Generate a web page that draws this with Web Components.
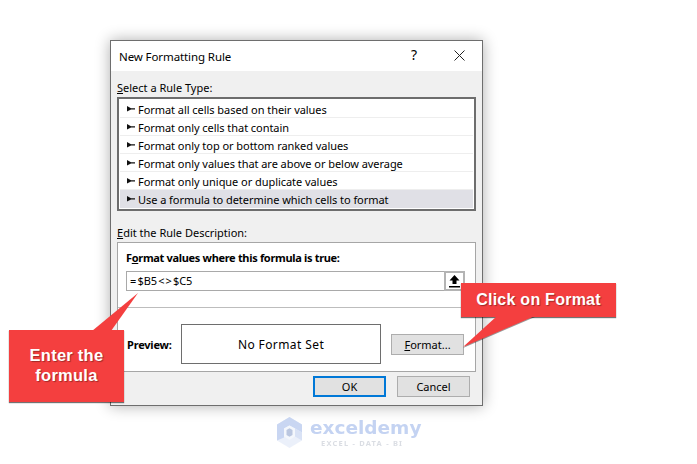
<!DOCTYPE html>
<html>
<head>
<meta charset="utf-8">
<title>New Formatting Rule</title>
<style>
  html, body { margin: 0; background: #fff; }
</style>
</head>
<body>
<x-stage>
  <x-dialog heading="New Formatting Rule">
    <x-label><u>S</u>elect a Rule Type:</x-label>
    <x-rule-list>
      <x-rule-row>Format all cells based on their values</x-rule-row>
      <x-rule-row>Format only cells that contain</x-rule-row>
      <x-rule-row>Format only top or bottom ranked values</x-rule-row>
      <x-rule-row>Format only values that are above or below average</x-rule-row>
      <x-rule-row>Format only unique or duplicate values</x-rule-row>
      <x-rule-row selected>Use a formula to determine which cells to format</x-rule-row>
    </x-rule-list>
    <x-label class="second"><u>E</u>dit the Rule Description:</x-label>
    <x-rule-editor></x-rule-editor>
    <x-footer>
      <x-button default>OK</x-button>
      <x-button>Cancel</x-button>
    </x-footer>
  </x-dialog>
  <x-callout side="left">Enter the<br>formula</x-callout>
  <x-callout side="right">Click on Format</x-callout>
  <x-watermark></x-watermark>
</x-stage>

<script>
const UI_FONT = `"Noto Sans", "Open Sans", sans-serif`;

function shadow(el, html) {
  el.attachShadow({ mode: 'open' }).innerHTML = html;
}

class XStage extends HTMLElement {
  constructor() {
    super();
    shadow(this, `
      <style>
        :host { display: block; position: relative; width: 697px; height: 464px; overflow: hidden;
                box-sizing: border-box; padding: 40px 0 0 110px; background: #fff; }
      </style>
      <slot></slot>`);
  }
}

class XDialog extends HTMLElement {
  constructor() {
    super();
    shadow(this, `
      <style>
        :host { display: flex; flex-direction: column; box-sizing: border-box; width: 373px; height: 366px;
                border: 1px solid #6e6e6e; background: #f0f0f0; font: 11px ${UI_FONT}; color: #000;
                box-shadow: 0 0 14px rgba(0,0,0,.32); }
        .bar { display: flex; align-items: center; height: 30px; flex: none; background: #fff;
               padding-left: 8px; font-size: 11.5px; letter-spacing: -.1px; }
        .bar span { flex: 1; }
        .help { flex: none !important; width: 12px; font-size: 14px; margin-right: 31px; margin-top: -3px; }
        svg { display: block; margin-right: 17px; margin-top: -1px; }
        .body { flex: 1; display: flex; flex-direction: column; padding: 0 6px 0 6px; }
      </style>
      <div class="bar">
        <span id="t"></span>
        <span class="help">?</span>
        <svg width="11" height="11" viewBox="0 0 11 11"><path d="M.5.5l10 10M10.5.5l-10 10" stroke="#222" fill="none"/></svg>
      </div>
      <div class="body"><slot></slot></div>`);
    this.shadowRoot.getElementById('t').textContent = this.getAttribute('heading');
  }
}

class XLabel extends HTMLElement {
  constructor() {
    super();
    shadow(this, `
      <style>
        :host { display: block; box-sizing: border-box; height: 26px; padding-top: 8px; line-height: 18px; }
        :host(.second) { height: 31px; padding-top: 13px; }
      </style>
      <slot></slot>`);
  }
}

class XRuleList extends HTMLElement {
  constructor() {
    super();
    shadow(this, `
      <style>
        :host { display: flex; flex-direction: column; box-sizing: border-box; height: 114px;
                border: 2px solid #6d6d6d; background: #fff; padding: 1px; }
      </style>
      <slot></slot>`);
  }
}

class XRuleRow extends HTMLElement {
  constructor() {
    super();
    shadow(this, `
      <style>
        :host { display: flex; align-items: center; gap: 3px; box-sizing: border-box; height: 18px;
                padding-left: 7px; box-shadow: inset 0 -1px #eeeeee; letter-spacing: -.05px; }
        :host([selected]) { background: #e0e0e6; box-shadow: none; }
        svg { flex: none; }
      </style>
      <svg width="8" height="6" viewBox="0 0 8 6"><path d="M0 0l4 2.2h4v1.2H4L0 5.6z" fill="#111"/></svg>
      <slot></slot>`);
  }
}

class XRuleEditor extends HTMLElement {
  constructor() {
    super();
    shadow(this, `
      <style>
        :host { display: flex; flex-direction: column; box-sizing: border-box; height: 130px;
                border: 1px solid #a6a6a6; background: #fff; padding: 0 0 0 8px; }
        .head { height: 28px; line-height: 29px; font-weight: 700; flex: none; letter-spacing: -.32px; }
        .field { display: flex; width: 339px; height: 20px; flex: none; box-sizing: border-box;
                 border: 1px solid #a9a9a9; background: #fff; }
        .field span { flex: 1; line-height: 18px; padding-left: 3px; word-spacing: -1.5px; letter-spacing: -.1px; }
        .pick { flex: none; width: 21px; margin: -1px -1px -1px 0; box-sizing: border-box;
                border: 2px solid #b4b4b4; display: flex; align-items: center; justify-content: center; }
        hr { margin: 16px 0 0 -8px; border: 0; border-top: 1px solid #bdbdbd; height: 0; flex: none; }
        .preview { display: flex; align-items: center; margin-top: 16px; height: 40px; flex: none; }
        b { width: 54px; padding-left: 1px; flex: none; letter-spacing: -.2px; }
        .box { width: 200px; height: 40px; box-sizing: border-box; border: 1px solid #6e6e6e; flex: none;
               display: flex; align-items: center; justify-content: center; font-size: 12px; letter-spacing: .4px; }
        x-button { margin-left: 10px; }
      </style>
      <div class="head">F<u>o</u>rmat values where this formula is true:</div>
      <div class="field">
        <span>= $B5 &lt; &gt; $C5</span>
        <div class="pick"><svg width="11" height="13" viewBox="0 0 11 13"><path d="M5.5 0L10.5 5.5H7.5V9H3.5V5.5H.5zM0 11h11v1.6H0z" fill="#000"/></svg></div>
      </div>
      <hr>
      <div class="preview">
        <b>Preview:</b>
        <div class="box">No Format Set</div>
        <x-button small><u>F</u>ormat...</x-button>
      </div>`);
  }
}

class XFooter extends HTMLElement {
  constructor() {
    super();
    shadow(this, `
      <style>
        :host { display: flex; justify-content: flex-end; gap: 11px; padding: 4px 6px 0 0; }
      </style>
      <slot></slot>`);
  }
}

class XButton extends HTMLElement {
  constructor() {
    super();
    shadow(this, `
      <style>
        :host { display: flex; align-items: center; justify-content: center; box-sizing: border-box;
                width: 73px; height: 21px; background: #e1e1e1; border: 1px solid #adadad; flex: none; }
        :host([default]) { border: 2px solid #0078d7; }
      </style>
      <slot></slot>`);
  }
}

class XCallout extends HTMLElement {
  constructor() {
    super();
    const left = this.getAttribute('side') === 'left';
    shadow(this, `
      <style>
        :host { position: absolute; display: block; box-sizing: border-box; background: #f43f3f; color: #fff;
                font: 700 16px/20px "Liberation Sans", Arial, sans-serif; text-align: center; letter-spacing: .25px;
                text-shadow: 1px 1px 1px rgba(0,0,0,.35); box-shadow: 0 1px 1px rgba(0,0,0,.55); }
        :host([side=left]) { left: 9px; top: 330px; width: 115px; height: 72px; padding-top: 15px; font-size: 16.5px; }
        :host([side=right]) { left: 461px; top: 283px; width: 155px; height: 34px; padding-top: 7px; }
        :host([side=right]) svg { filter: drop-shadow(0 1px 0 rgba(0,0,0,.4)); }
        svg { position: absolute; overflow: visible; left: 0; top: 0; }
      </style>
      <svg width="1" height="1">${left
        ? '<path d="M83 1L129 -37L102 1z" fill="#f43f3f"/>'
        : '<path d="M36 33L2 64L74 33z" fill="#f43f3f"/>'}</svg>
      <slot></slot>`);
  }
}

class XWatermark extends HTMLElement {
  constructor() {
    super();
    shadow(this, `
      <style>
        :host { position: absolute; left: 277px; top: 417px; display: flex; gap: 8px; align-items: flex-start; opacity: .6; }
        .word { font: 700 18.5px/17px "DejaVu Sans", sans-serif; color: #9db6ea; margin-top: 2px; }
        .sub { font: 700 7.5px/9px "Noto Sans", sans-serif; color: #c3c8d2; letter-spacing: 1.2px; margin: 3px 0 0 11px; }
      </style>
      <svg width="25" height="31" viewBox="0 0 25 31">
        <path d="M12.5 0L25 7.5v16L12.5 31 0 23.5v-16z" fill="#dfe7f7"/>
        <path d="M12.5 0L25 7.5v8l-7-4-5.500-3-5.500 3v9L0 23.500v-16z" fill="#a6bcea"/>
        <path d="M25 15.500v8l-7-4v-8z" fill="#c0cff0"/>
        <path d="M7 11.500l5.500-3 5.500 3v8L12.500 23 7 19.500z" fill="#eef2fb"/>
        <path d="M9.500 13l3-1.700 3 1.700v5l-3 1.700-3-1.700z" fill="#8fa3cc"/>
      </svg>
      <div><div class="word">exceldemy</div><div class="sub">EXCEL - DATA - BI</div></div>`);
  }
}

customElements.define('x-stage', XStage);
customElements.define('x-dialog', XDialog);
customElements.define('x-label', XLabel);
customElements.define('x-rule-list', XRuleList);
customElements.define('x-rule-row', XRuleRow);
customElements.define('x-button', XButton);
customElements.define('x-rule-editor', XRuleEditor);
customElements.define('x-footer', XFooter);
customElements.define('x-callout', XCallout);
customElements.define('x-watermark', XWatermark);
</script>
</body>
</html>
